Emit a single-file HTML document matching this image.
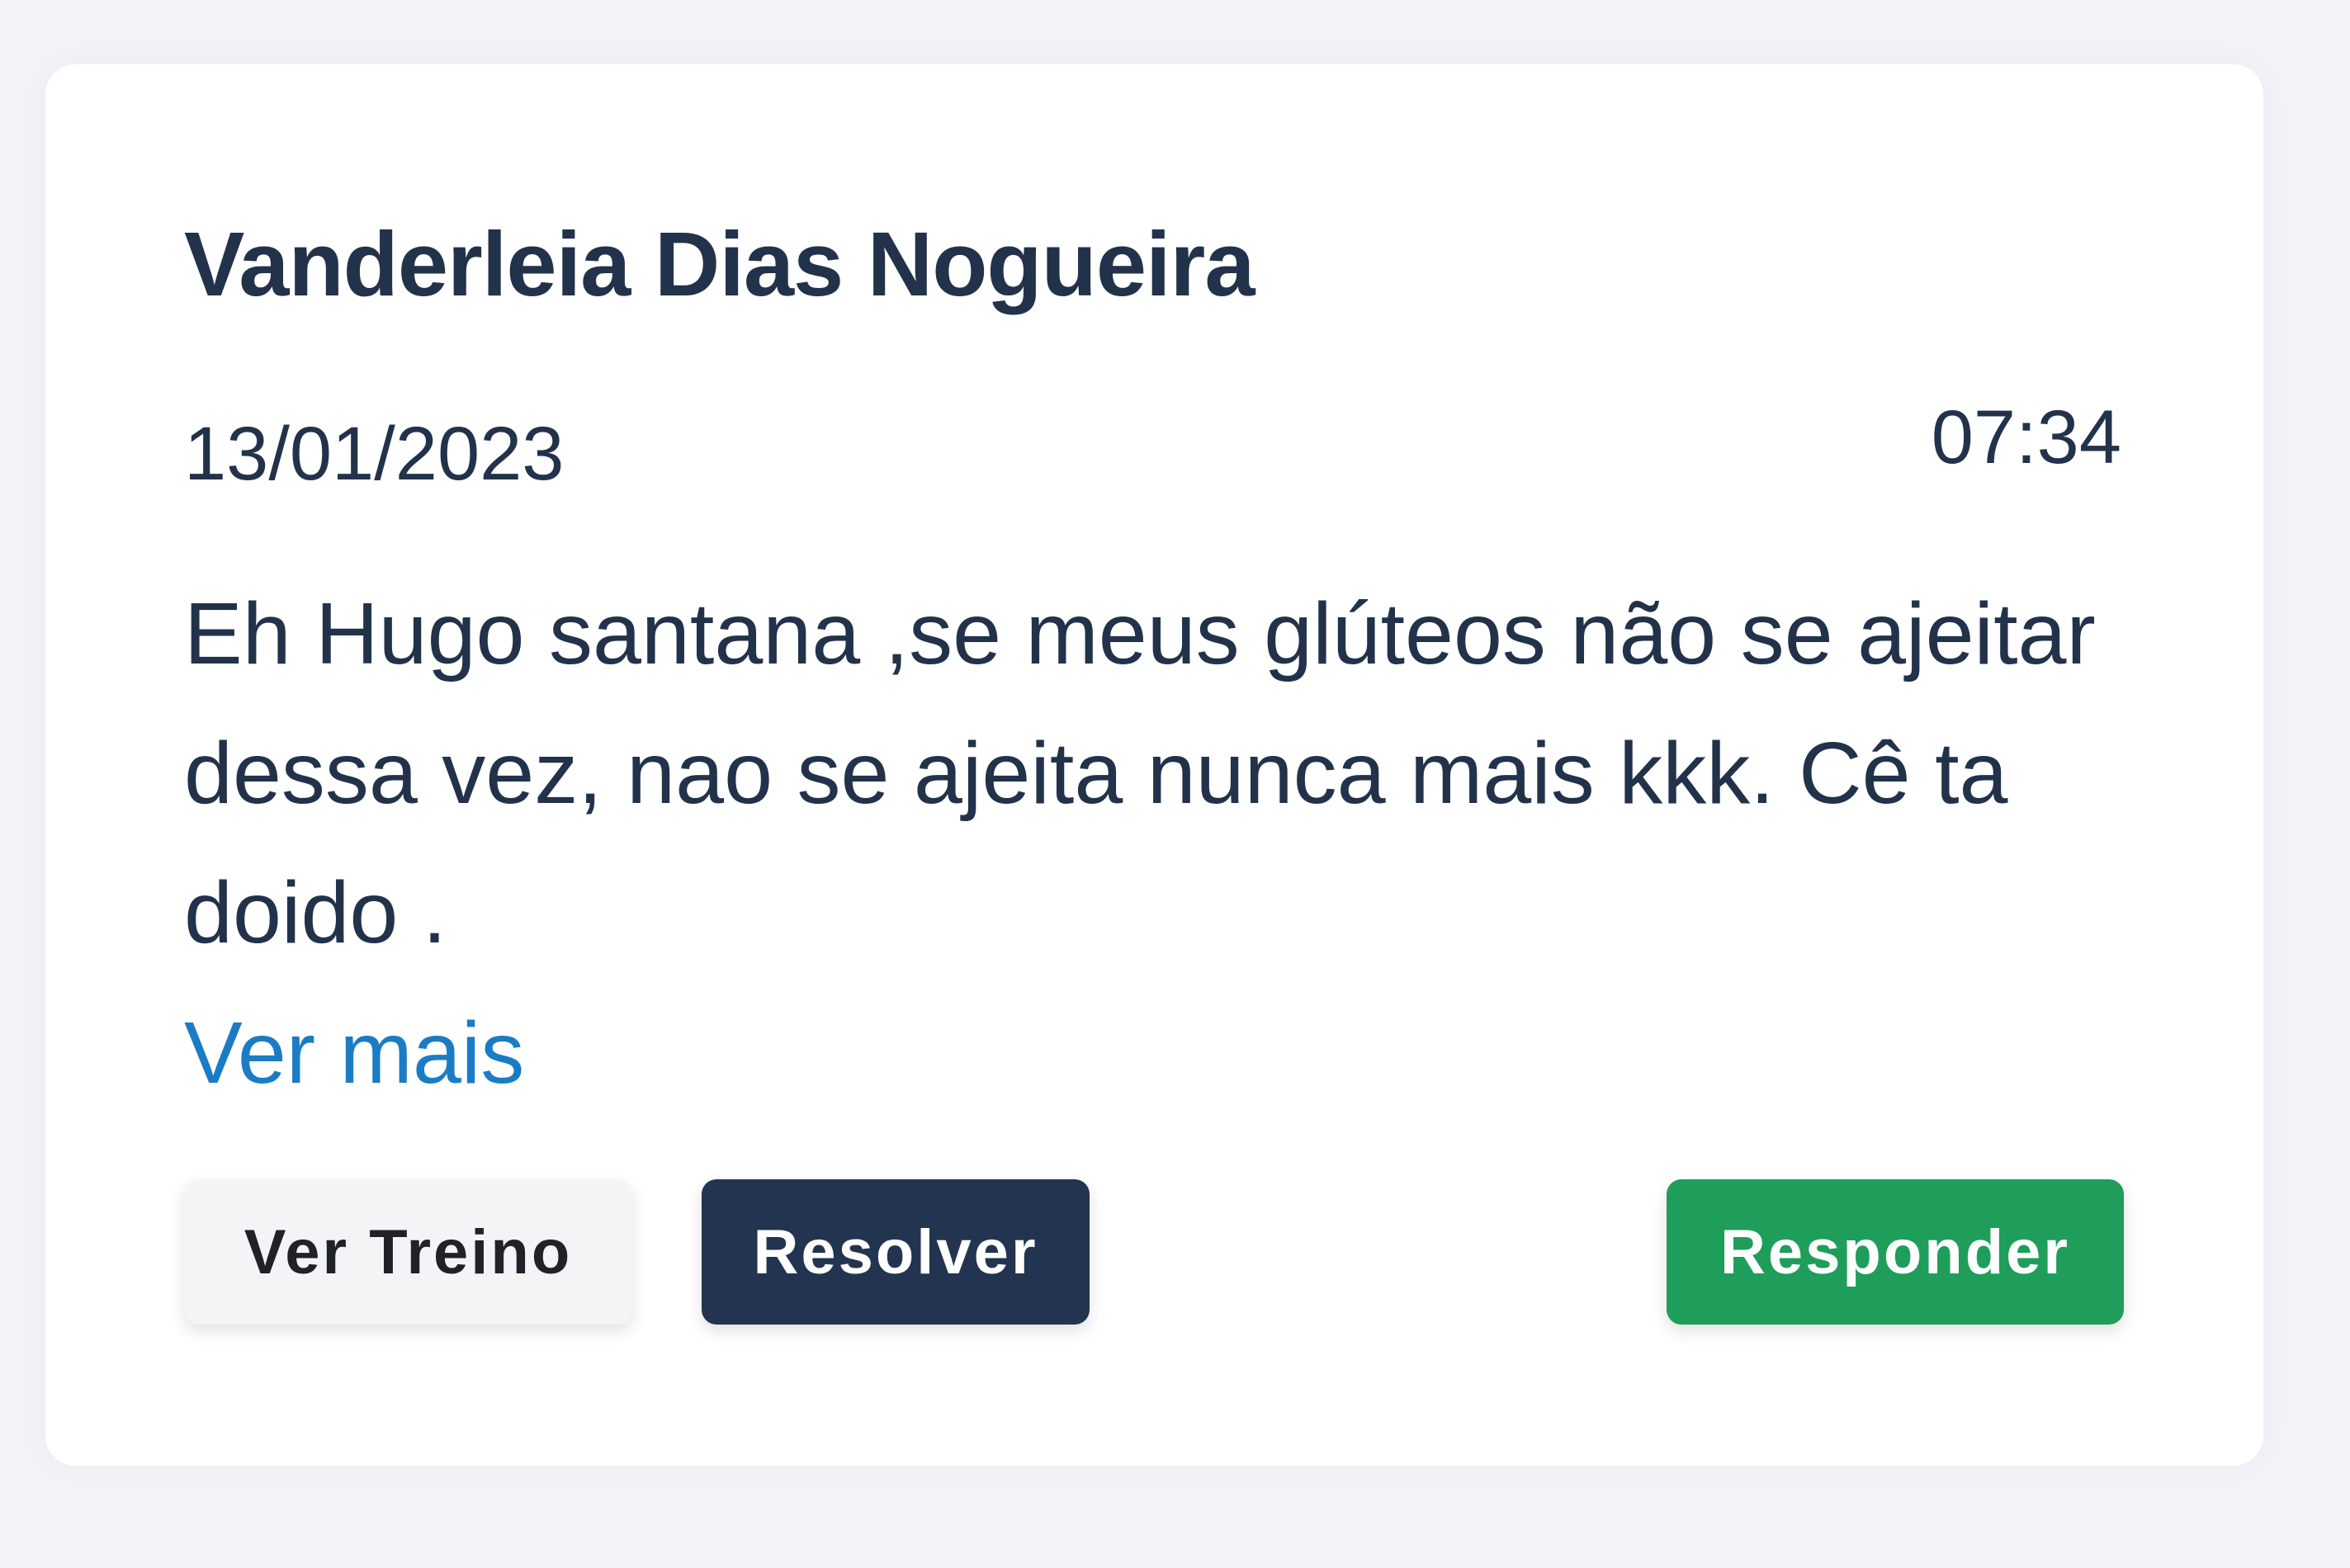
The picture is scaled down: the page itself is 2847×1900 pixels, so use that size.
<!DOCTYPE html>
<html><head><meta charset="utf-8"><style>
html,body{margin:0;padding:0}
body{width:2847px;height:1900px;background:#f2f3f7;position:relative;overflow:hidden;font-family:"Liberation Sans",sans-serif;color:#22324a}
.card{position:absolute;left:55px;top:78px;width:2687px;height:1698px;background:#fff;border-radius:36px;box-shadow:0 0 40px rgba(0,0,0,0.03)}
.t{position:absolute;white-space:nowrap}
.btn{position:absolute;top:1429px;height:176px;border-radius:18px;font-weight:bold;font-size:76px;letter-spacing:3px;display:flex;align-items:center;justify-content:center;box-shadow:0 8px 20px rgba(0,0,0,0.12)}
</style></head><body>
<div class="card"></div>
<div class="t" style="left:223px;top:257px;font-size:110px;font-weight:bold;color:#22324a;letter-spacing:-1px">Vanderleia Dias Nogueira</div>
<div class="t" style="left:223px;top:498px;font-size:92px">13/01/2023</div>
<div class="t" style="right:277px;top:478px;font-size:92px">07:34</div>
<div class="t" style="left:223px;top:684px;font-size:106px;line-height:169px">Eh Hugo santana ,se meus glúteos não se ajeitar<br>dessa vez, nao se ajeita nunca mais kkk. Cê ta<br>doido .</div>
<div class="t" style="left:223px;top:1216px;font-size:106px;color:#1a7cc4">Ver mais</div>
<div class="btn" style="left:223px;width:543px;background:#f3f4f6;color:#1f2328">Ver Treino</div>
<div class="btn" style="left:850px;width:470px;background:#22344f;color:#fff">Resolver</div>
<div class="btn" style="left:2019px;width:554px;background:#1e9e5a;color:#fff">Responder</div>
</body></html>
